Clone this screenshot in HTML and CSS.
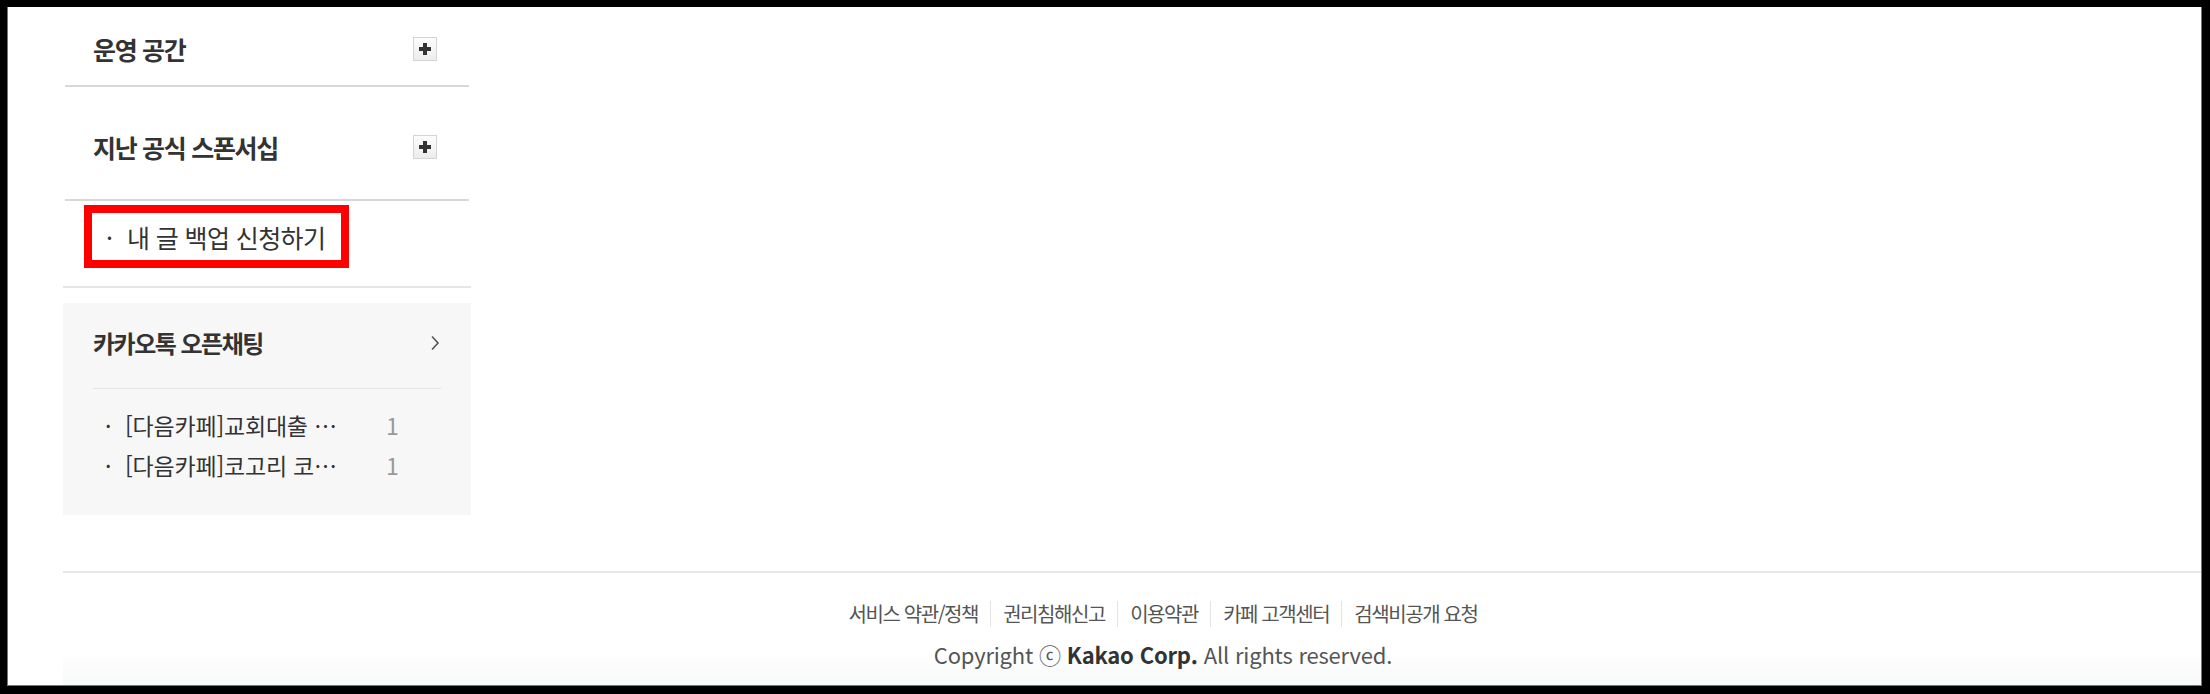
FILE: index.html
```html
<!DOCTYPE html>
<html lang="ko">
<head>
<meta charset="utf-8">
<title>Cafe sidebar</title>
<link rel="stylesheet" href="styles.css">
</head>
<body>
<div class="page">
  <div class="main">
    <aside class="sidebar">
      <div class="menu-head first">
        <span class="menu-title">운영 공간</span>
        <span class="plus"><svg width="12" height="12" viewBox="0 0 12 12"><path d="M6 0V12M0 6H12" stroke="#333" stroke-width="4"/></svg></span>
      </div>
      <div class="menu-head second">
        <span class="menu-title">지난 공식 스폰서십</span>
        <span class="plus"><svg width="12" height="12" viewBox="0 0 12 12"><path d="M6 0V12M0 6H12" stroke="#333" stroke-width="4"/></svg></span>
      </div>
      <div class="backup">
        <a class="backup-link" href="#"><span class="dot">·</span>내 글 백업 신청하기</a>
      </div>
      <div class="chat-box">
        <div class="chat-head">
          <span class="chat-title">카카오톡 오픈채팅</span>
          <svg class="chev" width="10" height="16" viewBox="0 0 10 16"><path d="M2 1.5L8 8L2 14.5" fill="none" stroke="#555" stroke-width="1.6"/></svg>
        </div>
        <ul class="chat-list">
          <li class="chat-item"><span class="dot2">·</span><span class="chat-name">[다음카페]교회대출 모임방</span><span class="chat-count">1</span></li>
          <li class="chat-item"><span class="dot2">·</span><span class="chat-name">[다음카페]코고리 코인방</span><span class="chat-count">1</span></li>
        </ul>
      </div>
    </aside>
  </div>
  <footer class="footer">
    <div class="footer-inner">
      <ul class="links">
        <li>서비스 약관/정책</li>
        <li>권리침해신고</li>
        <li>이용약관</li>
        <li>카페 고객센터</li>
        <li>검색비공개 요청</li>
      </ul>
      <p class="copy">Copyright ⓒ <b>Kakao Corp.</b> All rights reserved.</p>
    </div>
  </footer>
</div>
</body>
</html>
```
FILE: styles.css
```css
* { box-sizing: border-box; }
html, body { margin: 0; padding: 0; }
body {
  background: #000;
  width: 2210px;
  height: 694px;
  padding: 7px 8px 8px 7px;
  font-family: "Noto Sans CJK KR", "Noto Sans", sans-serif;
  color: #333;
}
.page {
  background: #fff;
  height: 679px;
  overflow: hidden;
  display: flex;
  flex-direction: column;
  border-left: 1px solid #777;
  border-right: 1px solid #777;
  border-bottom: 1px solid #777;
}
.main {
  padding-left: 55px;
  height: 564px;
}
.sidebar {
  width: 408px;
}
.menu-head {
  display: flex;
  align-items: center;
  justify-content: space-between;
  margin: 0 2px;
  padding-left: 28px;
  padding-right: 32px;
  border-bottom: 2px solid #d8d8d8;
  height: 48px;
  box-sizing: content-box;
}
.menu-head.first { padding-top: 18px; padding-bottom: 12px; }
.menu-head.second { padding-top: 36px; padding-bottom: 28px; }
.menu-title {
  font-size: 25px;
  font-weight: 700;
  letter-spacing: -1.3px;
  color: #333;
  line-height: 48px;
}
.plus {
  width: 24px;
  height: 24px;
  border: 1px solid #d4d4d4;
  background: linear-gradient(#fdfdfd, #ececec);
  display: flex;
  align-items: center;
  justify-content: center;
}
.plus svg { display: block; }
.backup {
  padding: 4px 0 18px 21px;
  border-bottom: 2px solid #e6e6e6;
}
.backup-link {
  display: inline-flex;
  align-items: center;
  width: 265px;
  height: 63px;
  border: 8px solid #ff0000;
  padding-left: 14px;
  font-size: 25px;
  letter-spacing: -0.6px;
  color: #333;
  text-decoration: none;
  white-space: nowrap;
}
.dot { width: 21px; }
.chat-box {
  margin-top: 15px;
  background: #f7f7f7;
  padding: 0 30px 30px;
}
.chat-head {
  display: flex;
  align-items: center;
  justify-content: space-between;
  padding-top: 20px;
  padding-bottom: 25px;
  border-bottom: 1px solid #e4e4e4;
  height: 86px;
}
.chat-title {
  font-size: 24px;
  font-weight: 700;
  letter-spacing: -1.5px;
  line-height: 40px;
  color: #333;
}
.chev { margin-right: 1px; }
.chat-list {
  list-style: none;
  margin: 0;
  padding: 16px 0 0;
}
.chat-item {
  display: flex;
  align-items: center;
  height: 40px;
  font-size: 23px;
  letter-spacing: -0.2px;
  color: #333;
}
.dot2 { width: 32px; padding-left: 12px; }
.chat-name {
  width: 227px;
  white-space: nowrap;
  overflow: hidden;
  text-overflow: ellipsis;
}
.chat-count {
  margin-left: 34px;
  color: #999;
}
.footer {
  margin-left: 55px;
  border-top: 2px solid #e8e8e8;
  flex: 1;
  background: linear-gradient(#fff 70%, #f7f8f8);
}
.footer-inner {
  padding-left: 62px;
  text-align: center;
}
.links {
  list-style: none;
  margin: 0;
  padding: 28px 0 0;
  display: flex;
  justify-content: center;
  align-items: center;
}
.links li {
  font-size: 20px;
  letter-spacing: -1.4px;
  color: #555;
  line-height: 26px;
  padding: 0 12px;
  border-left: 1px solid #e3e3e3;
}
.links li:first-child { border-left: 0; }
.copy {
  margin: 12px 0 0;
  font-size: 22px;
  letter-spacing: -0.2px;
  line-height: 30px;
  color: #555;
}
.copy b { color: #333; font-weight: 700; }
```
